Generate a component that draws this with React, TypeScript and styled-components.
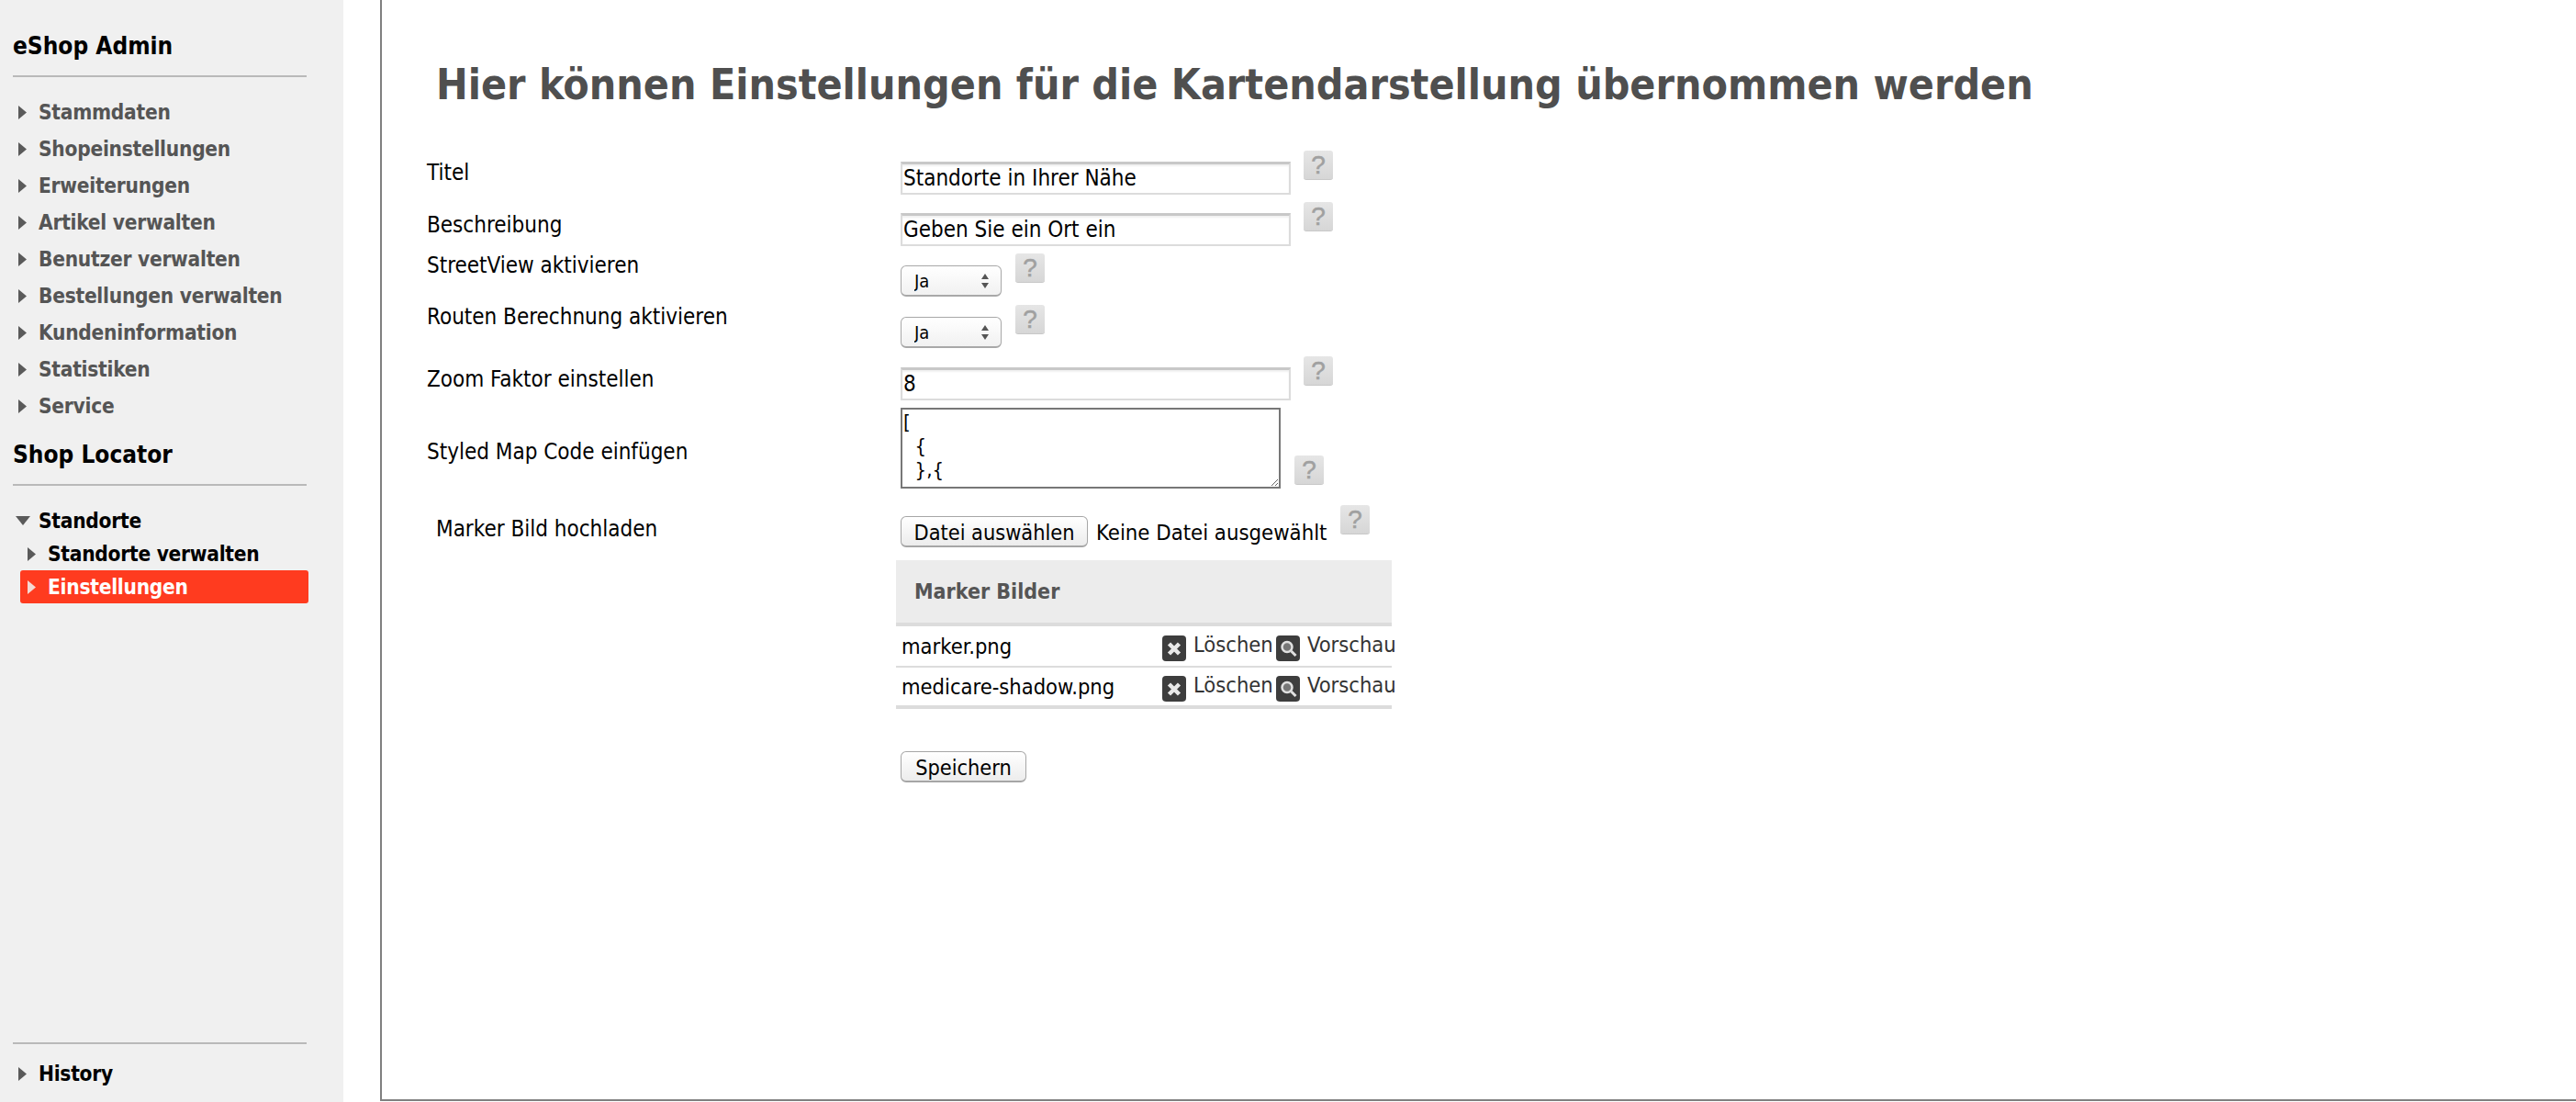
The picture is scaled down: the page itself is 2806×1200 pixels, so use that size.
import React from "react";
import styled, { createGlobalStyle } from "styled-components";

const FONT = `"DejaVu Sans Condensed", "DejaVu Sans", sans-serif`;

const Global = createGlobalStyle`
  html, body { margin: 0; padding: 0; background: #fff; height: 1200px; overflow: hidden; }
  body { font-family: ${FONT}; color: #000; }
  * { box-sizing: border-box; }
`;

const Page = styled.div`
  display: flex;
  height: 1200px;
`;

const Sidebar = styled.aside`
  width: 374px;
  flex: none;
  background: #f0f0f0;
  display: flex;
  flex-direction: column;
  padding: 30px 0 0 14px;
`;

const Heading = styled.h2<{ $top?: number }>`
  margin: ${(p) => p.$top ?? 0}px 0 0;
  width: 320px;
  height: 54px;
  border-bottom: 2px solid #b9b9b9;
  font-size: 26px;
  line-height: 40px;
  font-weight: bold;
  color: #000;
`;

const Nav = styled.nav<{ $top: number }>`
  margin-top: ${(p) => p.$top}px;
  display: flex;
  flex-direction: column;
`;

const NavRow = styled.a<{ $dark?: boolean; $h?: number }>`
  display: flex;
  align-items: center;
  height: ${(p) => p.$h ?? 40}px;
  padding-left: 6px;
  font-size: 22.5px;
  font-weight: bold;
  letter-spacing: -0.25px;
  color: ${(p) => (p.$dark ? "#000" : "#555")};
`;

const SubRow = styled.a<{ $active?: boolean }>`
  display: flex;
  align-items: center;
  height: 36px;
  width: 314px;
  margin-left: 8px;
  padding-left: 8px;
  border-radius: 3px;
  font-size: 22.5px;
  font-weight: bold;
  letter-spacing: -0.25px;
  color: ${(p) => (p.$active ? "#fff" : "#000")};
  background: ${(p) => (p.$active ? "#ff3b1f" : "transparent")};
`;

const ArrowBox = styled.span`
  width: 22px;
  flex: none;
  display: flex;
  align-items: center;
`;

const Footer = styled.div`
  margin-top: auto;
  width: 320px;
  height: 65px;
  border-top: 2px solid #b9b9b9;
  padding-top: 12px;
`;

const Main = styled.main`
  flex: 1;
  margin-left: 40px;
  border-left: 2px solid #808080;
  border-bottom: 2px solid #808080;
  height: 1199px;
  padding-left: 49px;
`;

const Title = styled.h1`
  margin: 0;
  height: 164px;
  padding: 62px 0 0 10px;
  font-size: 46.1px;
  line-height: 60px;
  font-weight: bold;
  color: #4f4f4f;
  white-space: nowrap;
`;

const Row = styled.div<{ $h?: number }>`
  display: grid;
  grid-template-columns: 516px 1fr;
  height: ${(p) => p.$h ?? 56}px;
`;

const Label = styled.label<{ $top: number; $indent?: number }>`
  display: block;
  margin-top: ${(p) => p.$top}px;
  padding-left: ${(p) => p.$indent ?? 0}px;
  font-size: 24px;
  line-height: 28px;
  color: #000;
`;

const Field = styled.div`
  display: flex;
  align-items: flex-start;
`;

const TextInput = styled.input`
  width: 425px;
  height: 36px;
  margin-top: 12px;
  padding: 0 2px 2px 1px;
  border: 2px solid #dcdcdc;
  border-top: 3px solid #c8c8c8;
  box-shadow: inset 0 2px 2px #f0f0f0;
  font: 24px ${FONT};
  color: #000;
  background: #fff;
  outline: none;
`;

const Select = styled.select`
  appearance: none;
  width: 110px;
  height: 34px;
  margin-top: 13px;
  padding: 0 0 0 14px;
  border: 1px solid #a8a8a8;
  border-bottom-width: 2px;
  border-radius: 6px;
  font: 20px ${FONT};
  color: #000;
  background: url("data:image/svg+xml;utf8,<svg xmlns='http://www.w3.org/2000/svg' width='10' height='18'><path d='M5 1 9 7H1zM5 17 1 11h8z' fill='%23555'/></svg>") no-repeat right 12px center, linear-gradient(#fff, #f1f1f1);
`;

const TextArea = styled.textarea`
  display: block;
  width: 414px;
  height: 88px;
  padding: 1px 1px;
  border: 2px solid #777;
  font: 22px/26px ${FONT};
  color: #000;
  resize: both;
  overflow: hidden;
  outline: none;
`;

const Button = styled.button<{ $w: number }>`
  width: ${(p) => p.$w}px;
  height: 34px;
  padding: 2px 0 0;
  border: 1px solid #a6a6a6;
  border-bottom-width: 2px;
  border-radius: 6px;
  background: linear-gradient(#fff, #ececec);
  font: 23.3px ${FONT};
  color: #000;
`;

const FileButton = styled(Button)`
  margin-top: 12px;
`;

const FileNote = styled.span`
  width: 266px;
  margin-top: 16px;
  padding-left: 9px;
  font-size: 23.7px;
  line-height: 28px;
  white-space: nowrap;
`;

const Help = styled.span<{ $gap: number; $top?: number }>`
  width: 32px;
  height: 32px;
  flex: none;
  margin: ${(p) => p.$top ?? 0}px 0 0 ${(p) => p.$gap}px;
  border-radius: 3px;
  background: linear-gradient(#e6e6e6, #d6d6d6);
  border-bottom: 1px solid #c8c8c8;
  display: flex;
  align-items: center;
  justify-content: center;
  font: 28px "Liberation Sans", sans-serif;
  -webkit-text-stroke: 0.5px #a0a0a0;
  color: #a0a0a0;
`;

const TableWrap = styled.div`
  margin: 10px 0 0 511px;
  width: 540px;
  white-space: nowrap;
`;

const TableHead = styled.div`
  height: 72px;
  background: #ececec;
  border-bottom: 4px solid #dcdcdc;
  padding-left: 20px;
  display: flex;
  align-items: center;
  font-size: 23px;
  font-weight: bold;
  color: #555;
`;

const FileRow = styled.div<{ $h: number; $border: number }>`
  height: ${(p) => p.$h}px;
  display: grid;
  grid-template-columns: 284px 1fr;
  align-items: center;
  padding-left: 6px;
  border-bottom: ${(p) => p.$border}px solid #dcdcdc;
  font-size: 23.5px;
`;

const Actions = styled.div`
  display: flex;
  align-items: center;
  color: #333;
`;

const ActionText = styled.span<{ $w: number }>`
  width: ${(p) => p.$w}px;
  flex: none;
  margin-top: -4px;
`;

const IconBox = styled.svg`
  width: 26px;
  height: 28px;
  flex: none;
  margin-top: 4px;
  margin-right: 8px;
`;

const SaveRow = styled.div`
  margin: 46px 0 0 516px;
`;

const Arrow = ({ down, color = "#5a5a5a" }: { down?: boolean; color?: string }) =>
  down ? (
    <svg width="16" height="10" viewBox="0 0 16 10" style={{ marginLeft: -3 }}>
      <path d="M0 0h16L8 10z" fill={color} />
    </svg>
  ) : (
    <svg width="9" height="15" viewBox="0 0 9 15">
      <path d="M0 0l9 7.5L0 15z" fill={color} />
    </svg>
  );

const CloseIcon = () => (
  <IconBox viewBox="0 0 26 28">
    <rect width="26" height="28" rx="4" fill="#3d3d3d" />
    <path d="M7.5 9l11 11M18.5 9l-11 11" stroke="#e8e8e8" strokeWidth="4.5" />
  </IconBox>
);

const SearchIcon = () => (
  <IconBox viewBox="0 0 26 28">
    <rect width="26" height="28" rx="4" fill="#3d3d3d" />
    <circle cx="12" cy="12.5" r="5.5" fill="#777" stroke="#e0e0e0" strokeWidth="2.5" />
    <path d="M16.5 17l5 5" stroke="#e0e0e0" strokeWidth="3" />
  </IconBox>
);

const items = ["Stammdaten", "Shopeinstellungen", "Erweiterungen", "Artikel verwalten", "Benutzer verwalten", "Bestellungen verwalten", "Kundeninformation", "Statistiken", "Service"];

const files = [
  { name: "marker.png", h: 45, border: 2 },
  { name: "medicare-shadow.png", h: 45, border: 4 },
];

export default function App() {
  return (
    <>
      <Global />
      <Page>
        <Sidebar>
          <Heading>eShop Admin</Heading>
          <Nav $top={18}>
            {items.map((t) => (
              <NavRow key={t}>
                <ArrowBox><Arrow /></ArrowBox>
                {t}
              </NavRow>
            ))}
          </Nav>
          <Heading $top={13}>Shop Locator</Heading>
          <Nav $top={20}>
            <NavRow $dark $h={36}>
              <ArrowBox><Arrow down /></ArrowBox>
              Standorte
            </NavRow>
            <SubRow>
              <ArrowBox><Arrow /></ArrowBox>
              Standorte verwalten
            </SubRow>
            <SubRow $active>
              <ArrowBox><Arrow color="#f4d9d4" /></ArrowBox>
              Einstellungen
            </SubRow>
          </Nav>
          <Footer>
            <NavRow $dark>
              <ArrowBox><Arrow /></ArrowBox>
              History
            </NavRow>
          </Footer>
        </Sidebar>
        <Main>
          <Title>Hier können Einstellungen für die Kartendarstellung übernommen werden</Title>
          <Row>
            <Label $top={10}>Titel</Label>
            <Field>
              <TextInput defaultValue="Standorte in Ihrer Nähe" />
              <Help $gap={14}>?</Help>
            </Field>
          </Row>
          <Row>
            <Label $top={11}>Beschreibung</Label>
            <Field>
              <TextInput defaultValue="Geben Sie ein Ort ein" />
              <Help $gap={14}>?</Help>
            </Field>
          </Row>
          <Row>
            <Label $top={-1}>StreetView aktivieren</Label>
            <Field>
              <Select><option>Ja</option></Select>
              <Help $gap={15}>?</Help>
            </Field>
          </Row>
          <Row>
            <Label $top={-1}>Routen Berechnung aktivieren</Label>
            <Field>
              <Select><option>Ja</option></Select>
              <Help $gap={15}>?</Help>
            </Field>
          </Row>
          <Row>
            <Label $top={11}>Zoom Faktor einstellen</Label>
            <Field>
              <TextInput defaultValue="8" />
              <Help $gap={14}>?</Help>
            </Field>
          </Row>
          <Row $h={106}>
            <Label $top={34}>Styled Map Code einfügen</Label>
            <Field>
              <TextArea defaultValue={"[\n  {\n  },{\n"} />
              <Help $gap={15} $top={52}>?</Help>
            </Field>
          </Row>
          <Row $h={50}>
            <Label $top={12} $indent={10}>Marker Bild hochladen</Label>
            <Field>
              <FileButton $w={204}>Datei auswählen</FileButton>
              <FileNote>Keine Datei ausgewählt</FileNote>
              <Help $gap={9}>?</Help>
            </Field>
          </Row>
          <TableWrap>
            <TableHead>Marker Bilder</TableHead>
            {files.map((f) => (
              <FileRow key={f.name} $h={f.h} $border={f.border}>
                <span>{f.name}</span>
                <Actions>
                  <CloseIcon />
                  <ActionText $w={90}>Löschen</ActionText>
                  <SearchIcon />
                  <ActionText $w={95}>Vorschau</ActionText>
                </Actions>
              </FileRow>
            ))}
          </TableWrap>
          <SaveRow>
            <Button $w={137}>Speichern</Button>
          </SaveRow>
        </Main>
      </Page>
    </>
  );
}
